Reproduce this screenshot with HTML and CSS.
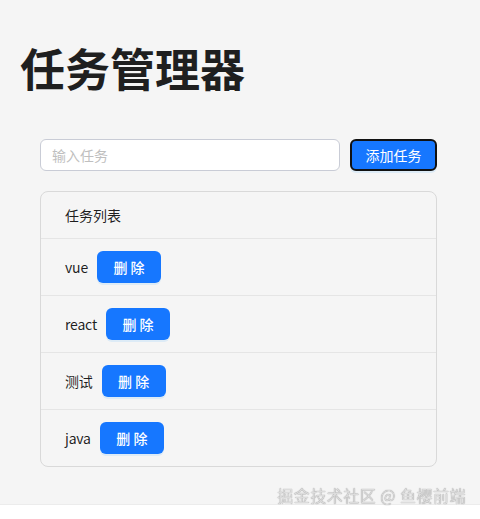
FILE: index.html
```html
<!DOCTYPE html>
<html lang="zh">
<head>
<meta charset="utf-8">
<link rel="stylesheet" href="styles.css">
</head>
<body>
<div class="app">
  <h1 class="title">任务管理器</h1>
  <div class="panel">
    <div class="add-row">
      <input class="task-input" type="text" placeholder="输入任务">
      <button class="btn btn-add">添加任务</button>
    </div>
    <div class="list">
      <div class="list-header">任务列表</div>
      <div class="list-item"><span class="item-text">vue</span><button class="btn btn-del">删 除</button></div>
      <div class="list-item"><span class="item-text">react</span><button class="btn btn-del">删 除</button></div>
      <div class="list-item"><span class="item-text">测试</span><button class="btn btn-del">删 除</button></div>
      <div class="list-item"><span class="item-text">java</span><button class="btn btn-del">删 除</button></div>
    </div>
  </div>
</div>
<div class="watermark">掘金技术社区 @ 鱼樱前端</div>
</body>
</html>
```
FILE: styles.css
```css
html, body {
  margin: 0;
  padding: 0;
  background: #ffffff;
  font-family: "Noto Sans CJK SC", "Noto Sans", sans-serif;
  color: rgba(0,0,0,0.88);
}
.app {
  background: #f5f5f5;
  height: 505px;
  box-sizing: border-box;
  padding: 30px 20px 0 20px;
  border-bottom: 1px solid #ececec;
}
.title {
  margin: 0;
  font-size: 45px;
  line-height: 76px;
  font-weight: 700;
  color: #1f1f1f;
}
.panel {
  width: 397px;
  margin: 33px 0 0 20px;
}
.add-row {
  display: flex;
  gap: 10px;
}
.task-input {
  width: 300px;
  height: 32px;
  box-sizing: border-box;
  border: 1px solid #c9ccd6;
  border-radius: 6px;
  padding: 4px 11px;
  font-family: inherit;
  font-size: 14px;
  background: #fff;
  outline: none;
}
.task-input::placeholder {
  color: #bfbfbf;
}
.btn {
  font-family: inherit;
  font-size: 14px;
  color: #fff;
  background: #1677ff;
  border-radius: 6px;
  height: 32px;
  cursor: pointer;
  box-shadow: 0 2px 0 rgba(5,145,255,0.1);
}
.btn-add {
  width: 87px;
  border: 2px solid #111;
  padding: 0;
}
.list {
  margin-top: 20px;
  border: 1px solid #d9d9d9;
  border-radius: 8px;
}
.list-header {
  height: 46px;
  display: flex;
  align-items: center;
  padding: 0 24px;
  font-size: 14px;
  border-bottom: 1px solid #e5e5e5;
}
.list-item {
  height: 56px;
  display: flex;
  align-items: center;
  gap: 9px;
  padding: 0 24px;
  font-size: 14px;
  border-bottom: 1px solid #e5e5e5;
}
.list-item:last-child {
  border-bottom: none;
}
.item-text {
  letter-spacing: -0.2px;
}
.btn-del {
  width: 64px;
  border: none;
  padding: 0;
  font-weight: 500;
}
.watermark {
  position: fixed;
  right: 14px;
  top: 483px;
  font-size: 16px;
  line-height: 24px;
  color: #dcdcdc;
  text-shadow: 0 0 1px #777;
  letter-spacing: 0.5px;
}
```
